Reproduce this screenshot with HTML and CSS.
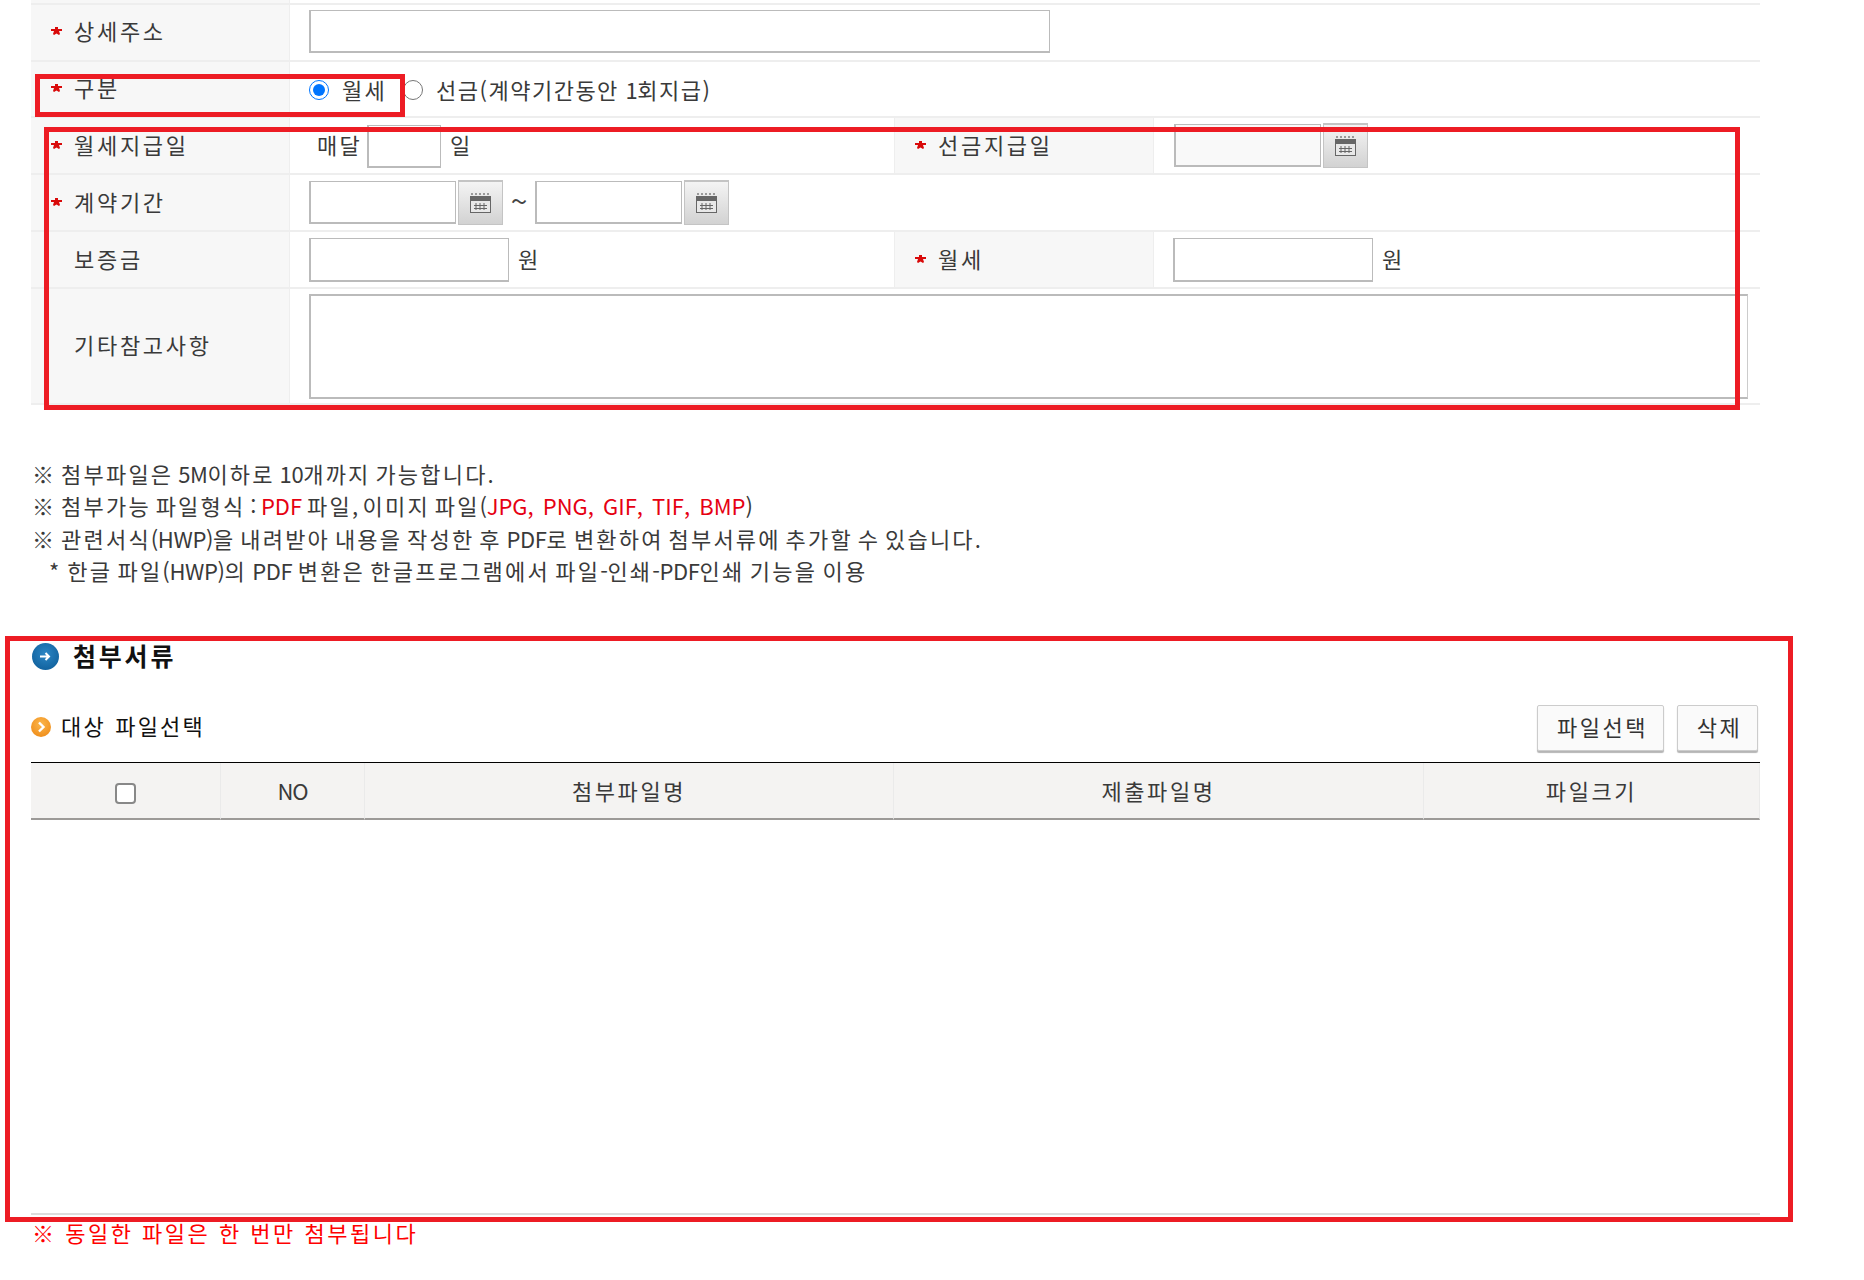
FILE: index.html
```html
<!DOCTYPE html>
<html lang="ko">
<head>
<meta charset="utf-8">
<title>첨부서류</title>
<link rel="stylesheet" href="styles.css">
</head>
<body>
<svg class="defs" width="0" height="0" aria-hidden="true">
  <symbol id="star" viewBox="0 0 11 8"><path d="M4 0h3v2h4v2H8l1 3-1 1-2.500-1.500L3 8 2 7l1-3H0V2h4z" fill="#d90a0a"/></symbol>
  <symbol id="cal" viewBox="0 0 21 20">
    <path d="M1 0h2v2H1zM5 0h2v2H5zM9 0h2v2H9zM13 0h2v2h-2zM17 0h2v2h-2z" fill="#999"/>
    <rect x="0.500" y="3.500" width="20" height="16" fill="#e8e8e8" stroke="#666"/>
    <rect x="1" y="4" width="19" height="4" fill="#666"/>
    <path d="M6 10v7M10 10v7M14 10v7M4 12.500h13M4 15.500h13" stroke="#666" fill="none"/>
  </symbol>
</svg>
<div class="page">
  <table class="form">
    <colgroup><col class="c1"><col class="c2"><col class="c3"><col></colgroup>
    <tr class="sliver"><th></th><td colspan="3"></td></tr>
    <tr class="r57"><th><span class="lab up"><svg class="star"><use href="#star"/></svg>상세주소</span></th>
      <td colspan="3"><input class="in w-addr push" type="text"></td></tr>
    <tr class="r56"><th><span class="lab up"><svg class="star"><use href="#star"/></svg>구분</span></th>
      <td colspan="3" class="mid"><div class="cell">
        <input class="rad" type="radio" name="k" checked><span class="rl">월세</span>
        <input class="rad rad2" type="radio" name="k"><span class="rl2">선금(계약기간동안 <span class="la">1</span>회지급)</span>
      </div></td></tr>
    <tr class="r57"><th><span class="lab"><svg class="star"><use href="#star"/></svg>월세지급일</span></th>
      <td><div class="cell tight"><span class="mae raise">매달</span><input class="in w-day" type="text"><span class="il raise">일</span></div></td>
      <th class="th2"><span class="lab"><svg class="star"><use href="#star"/></svg>선금지급일</span></th>
      <td><div class="cell"><input class="in w-date2 ro" type="text" readonly><button class="calbtn" type="button"><svg class="calic"><use href="#cal"/></svg></button></div></td></tr>
    <tr class="r57"><th><span class="lab"><svg class="star"><use href="#star"/></svg>계약기간</span></th>
      <td colspan="3"><div class="cell">
        <input class="in w-date" type="text"><button class="calbtn" type="button"><svg class="calic"><use href="#cal"/></svg></button>
        <span class="tilde">~</span>
        <input class="in w-date" type="text"><button class="calbtn" type="button"><svg class="calic"><use href="#cal"/></svg></button>
      </div></td></tr>
    <tr class="r57"><th><span class="lab nostar">보증금</span></th>
      <td><div class="cell push"><input class="in w-money" type="text"><span class="won raise">원</span></div></td>
      <th class="th2"><span class="lab"><svg class="star"><use href="#star"/></svg>월세</span></th>
      <td><div class="cell push"><input class="in w-money" type="text"><span class="won raise">원</span></div></td></tr>
    <tr class="r116"><th><span class="lab nostar">기타참고사항</span></th>
      <td colspan="3"><textarea class="ta"></textarea></td></tr>
  </table>

  <div class="notes">
    <p>※ 첨부파일은 <span class="la">5M</span>이하로 <span class="la">10</span>개까지 가능합니다<span class="la">.</span></p>
    <p>※ 첨부가능 파일형식 <span class="la">:</span> <em class="la">PDF</em> 파일<span class="la">,</span> 이미지 파일<span class="la">(</span><em class="la">JPG, PNG, GIF, TIF, BMP</em><span class="la">)</span></p>
    <p>※ 관련서식<span class="la">(HWP)</span>을 내려받아 내용을 작성한 후 <span class="la">PDF</span>로 변환하여 첨부서류에 추가할 수 있습니다<span class="la">.</span></p>
    <p class="sub-note"><span class="la ast">*</span> 한글 파일<span class="la">(HWP)</span>의 <span class="la">PDF</span> 변환은 한글프로그램에서 파일<span class="la">-</span>인쇄<span class="la">-PDF</span>인쇄 기능을 이용</p>
  </div>

  <h2 class="title">
    <svg class="ic-blue" viewBox="0 0 27 27"><defs><radialGradient id="bl" cx="50%" cy="40%" r="60%"><stop offset="0" stop-color="#2b86c5"/><stop offset="1" stop-color="#12639f"/></radialGradient></defs><circle cx="13.500" cy="13.500" r="13.500" fill="url(#bl)"/><path d="M8 13.500h9M13.500 10l3.500 3.500-3.500 3.500" stroke="#fff" stroke-width="2" fill="none"/></svg>
    <span class="title-t">첨부서류</span>
  </h2>
  <div class="subbar">
    <h3 class="subtitle">
      <svg class="ic-or" viewBox="0 0 20 20"><defs><radialGradient id="or" cx="50%" cy="35%" r="65%"><stop offset="0" stop-color="#fbb64c"/><stop offset="1" stop-color="#f08f1c"/></radialGradient></defs><circle cx="10" cy="10" r="10" fill="url(#or)"/><path d="M8 5.500l4.500 4.500L8 14.500" stroke="#fff" stroke-width="2.400" fill="none"/></svg>
      <span class="raise">대상 파일선택</span>
    </h3>
    <div class="btns"><button class="btn b1" type="button">파일선택</button><button class="btn b2" type="button">삭제</button></div>
  </div>
  <table class="files">
    <colgroup><col class="f1"><col class="f2"><col class="f3"><col class="f4"><col></colgroup>
    <tr><th><input class="chk" type="checkbox"></th><th class="no">NO</th><th>첨부파일명</th><th>제출파일명</th><th>파일크기</th></tr>
  </table>
  <div class="blank"></div>
  <p class="warn">※ 동일한 파일은 한 번만 첨부됩니다</p>
</div>
<div class="mark m1"></div>
<div class="mark m2"></div>
<div class="mark m3"></div>
</body>
</html>
```
FILE: styles.css
```css
html,body{margin:0;padding:0;background:#fff}
body{font-family:"Noto Sans CJK KR","Noto Sans",sans-serif;font-size:22px;color:#3a3a3a;letter-spacing:2.200px;word-spacing:-1px;position:relative;height:1280px;overflow:hidden}
.defs{position:absolute}
.page{width:1729px;margin-left:31px}
table{border-collapse:separate;border-spacing:0;table-layout:fixed;width:1729px}
.c1{width:259px}.c2{width:604px}.c3{width:260px}
.form th{background:#f7f7f7;font-weight:400;text-align:left;padding:0 0 0 20px;border-bottom:2px solid #eee;border-right:1px solid #eee}
.form td{vertical-align:top;padding:5px 0 0 19px;border-bottom:2px solid #eee}
.form td.mid{vertical-align:middle;padding-top:0}
.form .th2{border-left:1px solid #eee;border-right:1px solid #eee;padding-left:20px}
.sliver th,.sliver td{height:3px;padding:0!important}
.r57 th,.r57 td{height:55px;box-sizing:content-box}
.r57 td{height:50px}
.r56 th,.r56 td{height:54px}
.r116 th{height:114px}
.r116 td{height:109px}
.lab{display:flex;align-items:center;line-height:24px;padding-bottom:4px;letter-spacing:2.700px}
.up{margin-top:-1px}
.nostar{padding-left:23px}
.star{width:11px;height:8px;margin-right:12px;flex:none;margin-top:2px}
.cell{display:flex;align-items:center}
.push{margin-top:1px}
.raise{padding-bottom:4px}
.la{letter-spacing:-0.400px}
.ast{margin-right:3px}
.in{box-sizing:border-box;height:43px;border:2px solid #bbb;border-width:1px 1px 2px 2px;background:#fff;padding:0;margin:0;display:block}
.w-addr{width:741px}
.w-day{width:74px;height:43px;margin-top:2px}
.w-date{width:147px}
.w-date2{width:147px;margin-left:1px}
.ro{background:#f9f9f9}
.w-money{width:200px;height:44px}
.calbtn{box-sizing:border-box;width:45px;height:45px;margin:0 0 0 2px;padding:0;border:1px solid #c4c4c4;border-top-width:2px;background:linear-gradient(#f4f4f4,#d2d2d2);display:flex;align-items:center;justify-content:center}
.calic{width:21px;height:20px}
.tilde{width:32px;text-align:center;letter-spacing:0;font-size:30px;line-height:30px;color:#444;padding-bottom:5px}
.mae{width:58px;padding-left:8px;box-sizing:border-box;white-space:nowrap}
.il{margin-left:9px}
.won{margin-left:9px}
.rad{width:20px;height:20px;margin:2px 0 0 0;flex:none}
.rl{margin-left:13px;width:61px;white-space:nowrap}
.rad2{margin-left:0}
.rl2{margin-left:13px;letter-spacing:1.500px}
.ta{box-sizing:border-box;width:1439px;height:105px;border:1px solid #ccc;border-top:2px solid #bbb;border-bottom:2px solid #bbb;border-left:2px solid #bbb;display:block;margin:0;padding:0;resize:none;background:#fff}
.notes{margin-top:52px;word-spacing:-3.500px}
.notes p{margin:0;line-height:32.300px;padding-left:1px;white-space:nowrap}
.notes em{font-style:normal;color:#e60012;word-spacing:3px;letter-spacing:0}
.notes .sub-note{padding-left:18px;word-spacing:-3px}
.title{margin:56px 0 0;font-size:25px;font-weight:700;color:#111;letter-spacing:2.800px;display:flex;align-items:center;height:28px;line-height:28px}
.title-t{padding-bottom:2px}
.ic-blue{width:27px;height:27px;margin-right:14px;margin-left:1px}
.subbar{display:flex;justify-content:space-between;align-items:flex-start;margin-top:35px;height:46px;margin-bottom:11px}
.subtitle{margin:8px 0 0;font-size:22px;font-weight:400;color:#111;display:flex;align-items:center;line-height:24px;letter-spacing:2.200px;word-spacing:1px}
.ic-or{width:20px;height:20px;margin-right:10px;margin-top:-1px}
.btns{display:flex;gap:13px;margin-right:2px}
.btn{box-sizing:border-box;height:46px;border:1px solid #ccc;border-radius:2px;background:#fafafa;box-shadow:0 2px 1px #b5b5b5;font:inherit;letter-spacing:2.500px;color:#333;padding:0 0 4px 4px}
.b1{width:127px}.b2{width:81px}
.f1{width:190px}.f2{width:144px}.f3{width:529px}.f4{width:530px}
.files{border-top:1px solid #000}
.files th{height:53px;background:#f4f3f2;font-weight:400;border-right:1px solid #eaeaea;border-bottom:2px solid #9c9a98;padding:0 0 2px;color:#3a3a3a;letter-spacing:2.600px}
.files .no{letter-spacing:-1px}
.chk{appearance:none;-webkit-appearance:none;box-sizing:border-box;width:21px;height:21px;margin:0 0 0 -1px;vertical-align:middle;border:2px solid #888;border-radius:4px;background:#fff}
.blank{height:393px;border-bottom:2px solid #ddd}
.warn{margin:2px 0 0;color:#f00;padding-left:1px;line-height:30px;word-spacing:0;letter-spacing:2.500px}
.mark{position:absolute;border:5px solid #ed1c24;box-sizing:border-box;pointer-events:none}
.m1{left:35px;top:74px;width:370px;height:43px}
.m2{left:44px;top:127px;width:1696px;height:283px}
.m3{left:5px;top:636px;width:1788px;height:586px}
```
